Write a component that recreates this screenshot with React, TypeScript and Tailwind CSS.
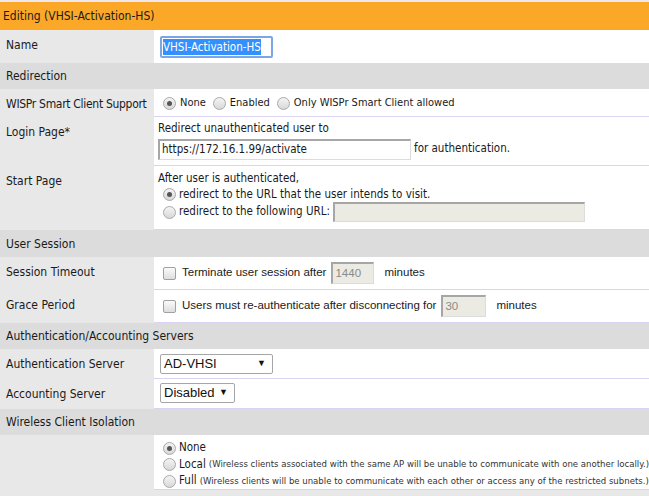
import React from 'react';

const LABEL = "font-['DejaVu_Sans_Condensed','DejaVu_Sans',sans-serif] text-[12px] text-[#1a1a1a] whitespace-nowrap";
const BODY = "font-['DejaVu_Sans_Condensed','DejaVu_Sans',sans-serif] text-[11.5px] text-[#1a1a1a] whitespace-nowrap";
const NARROW = "font-['Liberation_Sans',Arial,sans-serif] text-[11.5px] text-[#1a1a1a] whitespace-nowrap";

const Radio: React.FC<{ checked?: boolean }> = ({ checked }) => (
  <span className="inline-flex w-[13px] h-[13px] shrink-0 rounded-full border border-[#a9a9a9] bg-gradient-to-b from-[#f4f4f4] to-[#d8d8d8] items-center justify-center">
    {checked && <span className="w-[5px] h-[5px] rounded-full bg-[#555]" />}
  </span>
);

const Checkbox: React.FC = () => (
  <span className="inline-block w-[13px] h-[13px] shrink-0 rounded-[2px] border border-[#a0a0a0] bg-gradient-to-b from-[#fafafa] to-[#dedede]" />
);

const Section: React.FC<{ title: string; h: string }> = ({ title, h }) => (
  <div className={`col-span-2 bg-[#dcdcdc] flex items-center px-[6px] ${h} ${LABEL}`}>{title}</div>
);

const Row: React.FC<{ label: string; h: string; children?: React.ReactNode; labelClass?: string }> = ({
  label,
  h,
  children,
  labelClass = '',
}) => (
  <>
    <div className={`bg-[#e8e8e8] px-[6px] pt-[6px] ${h} ${LABEL} ${labelClass}`}>{label}</div>
    <div className={`bg-white border-b border-[#dad4f2] ${h}`}>{children}</div>
  </>
);

const TextBox: React.FC<{ value?: string; className: string; disabled?: boolean }> = ({ value, className, disabled }) => (
  <div
    className={`shrink-0 border border-t-2 border-l-2 border-[#a6a6a6] border-r-[#dcdcdc] border-b-[#dcdcdc] flex items-center px-[2px] ${
      disabled ? 'bg-[#ebebe4] text-[#8a8a8a]' : 'bg-white'
    } ${className}`}
  >
    {value}
  </div>
);

const Select: React.FC<{ value: string; w: string }> = ({ value, w }) => (
  <div className={`h-[20px] ${w} border border-[#a6a6a6] rounded-[2px] bg-white flex items-center justify-between pl-[3px] pr-[6px] font-['Liberation_Sans',Arial,sans-serif] text-[13px] text-[#111]`}>
    <span>{value}</span>
    <span className="text-[9px]">▼</span>
  </div>
);

const App: React.FC = () => {
  return (
    <div className="w-[649px] h-[496px] bg-[#e8e8e8] overflow-hidden">
      <div className="h-[2px] bg-[#eee8ee]" />
      <div className="h-[28px] bg-[#fba829] flex items-center px-[3px] font-['DejaVu_Sans_Condensed','DejaVu_Sans',sans-serif] text-[12px] text-[#1a1a1a]">
        Editing (VHSI-Activation-HS)
      </div>

      <div className="grid grid-cols-[154px_1fr]">
        <div className={`bg-[#e8e8e8] px-[6px] pt-[6px] h-[33px] ${LABEL}`}>Name</div>
        <div className="bg-white h-[33px] pl-[6px] pt-[6px]">
          <div className="w-[113px] h-[22px] border-2 border-[#7aa6e6] rounded-[2px] bg-white flex items-center px-[1px]">
            <span className={`bg-[#3390ff] text-white leading-[16px] ${BODY}`}>VHSI-Activation-HS</span>
          </div>
        </div>

        <Section title="Redirection" h="h-[26px]" />

        <Row label="WISPr Smart Client Support" h="h-[28px]" labelClass="tracking-[-0.3px]">
          <div className={`flex items-center gap-[4px] pl-[9px] pt-[6px] ${BODY}`}>
            <Radio checked />
            <span className="mr-[3px] text-[11px]">None</span>
            <Radio />
            <span className="mr-[3px] text-[11px]">Enabled</span>
            <Radio />
            <span className="text-[11px]">Only WISPr Smart Client allowed</span>
          </div>
        </Row>

        <Row label="Login Page*" h="h-[49px]">
          <div className={`pl-[4px] pt-[4px] ${BODY}`}>
            <div className="leading-[14px]">Redirect unauthenticated user to</div>
            <div className="flex items-start mt-[4px] gap-[3px]">
              <TextBox value="https://172.16.1.99/activate" className="w-[253px] h-[21px]" />
              <span className="pt-[1px]">for authentication.</span>
            </div>
          </div>
        </Row>

        <Row label="Start Page" h="h-[64px]">
          <div className={`pl-[4px] pt-[5px] ${BODY}`}>
            <div className="leading-[14px]">After user is authenticated,</div>
            <div className="flex items-center gap-[3px] pl-[5px] mt-[2px] leading-[14px]">
              <Radio checked />
              <span>redirect to the URL that the user intends to visit.</span>
            </div>
            <div className="flex items-center gap-[3px] pl-[5px] mt-[1px]">
              <Radio />
              <span>redirect to the following URL:</span>
              <TextBox className="w-[252px] h-[20px]" disabled />
            </div>
          </div>
        </Row>

        <Section title="User Session" h="h-[27px]" />

        <Row label="Session Timeout" h="h-[33px]">
          <div className={`flex items-center pl-[9px] pt-[5px] ${NARROW}`}>
            <Checkbox />
            <span className="ml-[6px]">Terminate user session after</span>
            <TextBox value="1440" disabled className="ml-[5px] w-[43px] h-[22px]" />
            <span className="ml-[10px]">minutes</span>
          </div>
        </Row>

        <Row label="Grace Period" h="h-[33px]">
          <div className={`flex items-center pl-[9px] pt-[5px] ${NARROW}`}>
            <Checkbox />
            <span className="ml-[6px]">Users must re-authenticate after disconnecting for</span>
            <TextBox value="30" disabled className="ml-[5px] w-[45px] h-[22px]" />
            <span className="ml-[10px]">minutes</span>
          </div>
        </Row>

        <Section title="Authentication/Accounting Servers" h="h-[26px]" />

        <Row label="Authentication Server" h="h-[30px]">
          <div className="pl-[6px] pt-[5px]">
            <Select value="AD-VHSI" w="w-[113px]" />
          </div>
        </Row>

        <Row label="Accounting Server" h="h-[30px]">
          <div className="pl-[6px] pt-[4px]">
            <Select value="Disabled" w="w-[75px]" />
          </div>
        </Row>

        <Section title="Wireless Client Isolation" h="h-[26px]" />

        <Row label="" h="h-[55px]">
          <div className={`pl-[9px] pt-[5px] ${BODY}`}>
            <div className="flex items-center gap-[3px] h-[16px]">
              <Radio checked />
              <span>None</span>
            </div>
            <div className="flex items-center gap-[3px] h-[17px]">
              <Radio />
              <span>Local</span>
              <span className="text-[9.5px] text-[#333] font-['DejaVu_Sans_Condensed',sans-serif]">
                (Wireless clients associated with the same AP will be unable to communicate with one another locally.)
              </span>
            </div>
            <div className="flex items-center gap-[3px] h-[16px]">
              <Radio />
              <span>Full</span>
              <span className="text-[9.5px] text-[#333] font-['DejaVu_Sans_Condensed',sans-serif]">
                (Wireless clients will be unable to communicate with each other or access any of the restricted subnets.)
              </span>
            </div>
          </div>
        </Row>
      </div>
    </div>
  );
};

export default App;
